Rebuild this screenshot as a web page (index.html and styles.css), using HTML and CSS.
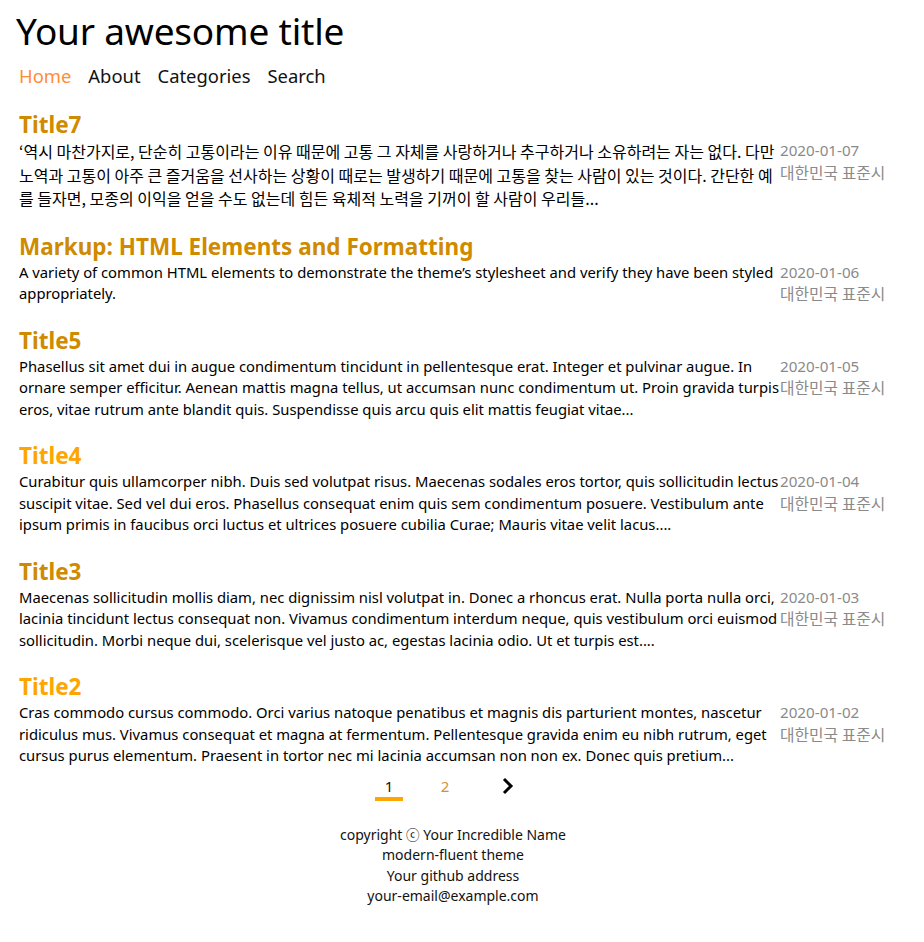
FILE: index.html
```html
<!DOCTYPE html>
<html lang="en">
<head>
<meta charset="utf-8">
<title>Your awesome title</title>
<link rel="stylesheet" href="styles.css">
</head>
<body>
<header class="site-header">
  <h1 class="site-title">Your awesome title</h1>
  <nav class="site-nav">
    <a class="nav-link active" href="#">Home</a>
    <a class="nav-link" href="#">About</a>
    <a class="nav-link" href="#">Categories</a>
    <a class="nav-link" href="#">Search</a>
  </nav>
</header>
<main class="posts">
  <article class="post">
    <h2 class="post-title visited">Title7</h2>
    <div class="post-row">
      <p class="post-excerpt ko">‘역시 마찬가지로, 단순히 고통이라는 이유 때문에 고통 그 자체를 사랑하거나 추구하거나 소유하려는 자는 없다. 다만 노역과 고통이 아주 큰 즐거움을 선사하는 상황이 때로는 발생하기 때문에 고통을 찾는 사람이 있는 것이다. 간단한 예를 들자면, 모종의 이익을 얻을 수도 없는데 힘든 육체적 노력을 기꺼이 할 사람이 우리들...</p>
      <div class="post-meta"><span>2020-01-07</span><span class="tz">대한민국 표준시</span></div>
    </div>
  </article>
  <article class="post">
    <h2 class="post-title visited">Markup: HTML Elements and Formatting</h2>
    <div class="post-row">
      <p class="post-excerpt">A variety of common HTML elements to demonstrate the theme’s stylesheet and verify they have been styled appropriately.</p>
      <div class="post-meta"><span>2020-01-06</span><span class="tz">대한민국 표준시</span></div>
    </div>
  </article>
  <article class="post">
    <h2 class="post-title visited">Title5</h2>
    <div class="post-row">
      <p class="post-excerpt">Phasellus sit amet dui in augue condimentum tincidunt in pellentesque erat. Integer et pulvinar augue. In ornare semper efficitur. Aenean mattis magna tellus, ut accumsan nunc condimentum ut. Proin gravida turpis eros, vitae rutrum ante blandit quis. Suspendisse quis arcu quis elit mattis feugiat vitae...</p>
      <div class="post-meta"><span>2020-01-05</span><span class="tz">대한민국 표준시</span></div>
    </div>
  </article>
  <article class="post">
    <h2 class="post-title">Title4</h2>
    <div class="post-row">
      <p class="post-excerpt">Curabitur quis ullamcorper nibh. Duis sed volutpat risus. Maecenas sodales eros tortor, quis sollicitudin lectus suscipit vitae. Sed vel dui eros. Phasellus consequat enim quis sem condimentum posuere. Vestibulum ante ipsum primis in faucibus orci luctus et ultrices posuere cubilia Curae; Mauris vitae velit lacus....</p>
      <div class="post-meta"><span>2020-01-04</span><span class="tz">대한민국 표준시</span></div>
    </div>
  </article>
  <article class="post">
    <h2 class="post-title visited">Title3</h2>
    <div class="post-row">
      <p class="post-excerpt">Maecenas sollicitudin mollis diam, nec dignissim nisl volutpat in. Donec a rhoncus erat. Nulla porta nulla orci, lacinia tincidunt lectus consequat non. Vivamus condimentum interdum neque, quis vestibulum orci euismod sollicitudin. Morbi neque dui, scelerisque vel justo ac, egestas lacinia odio. Ut et turpis est....</p>
      <div class="post-meta"><span>2020-01-03</span><span class="tz">대한민국 표준시</span></div>
    </div>
  </article>
  <article class="post">
    <h2 class="post-title">Title2</h2>
    <div class="post-row">
      <p class="post-excerpt">Cras commodo cursus commodo. Orci varius natoque penatibus et magnis dis parturient montes, nascetur ridiculus mus. Vivamus consequat et magna at fermentum. Pellentesque gravida enim eu nibh rutrum, eget cursus purus elementum. Praesent in tortor nec mi lacinia accumsan non non ex. Donec quis pretium...</p>
      <div class="post-meta"><span>2020-01-02</span><span class="tz">대한민국 표준시</span></div>
    </div>
  </article>
</main>
<nav class="pager">
  <a class="page current" href="#">1</a>
  <a class="page" href="#">2</a>
  <a class="page next" href="#" aria-label="Next"><svg width="14" height="18" viewBox="0 0 14 18"><path d="M3 2 L10 9 L3 16" fill="none" stroke="#000" stroke-width="3"/></svg></a>
</nav>
<footer class="site-footer">
  <div>copyright <span class="copy">ⓒ</span> Your Incredible Name</div>
  <div>modern-fluent theme</div>
  <div>Your github address</div>
  <div>your-email@example.com</div>
</footer>
</body>
</html>
```
FILE: styles.css
```css
html, body {
  margin: 0;
  padding: 0;
  background: #fff;
  color: #000;
  font-family: "Noto Sans", "Noto Sans CJK KR", sans-serif;
}
a { text-decoration: none; }

.site-header {
  padding: 8px 16px 0 16px;
}
.site-title {
  margin: 0;
  font-weight: 400;
  font-size: 37px;
  line-height: 46px;
  letter-spacing: -0.2px;
}
.site-nav {
  display: flex;
  gap: 17px;
  padding: 9px 0 0 3px;
}
.nav-link {
  color: #111;
  font-size: 18.4px;
  line-height: 26px;
}
.nav-link.active { color: #ff8c38; }

.posts {
  padding: 21px 38px 0 19px;
}
.post {
  margin-bottom: 21px;
}
.post-title {
  margin: 0;
  font-size: 22.5px;
  line-height: 30px;
  font-weight: 700;
  color: #ffa500;
}
.post-title.visited { color: #d08a00; }
.post-row {
  display: flex;
  align-items: flex-start;
}
.post-excerpt {
  flex: 1;
  margin: 0;
  font-size: 14.8px;
  line-height: 21.5px;
}
.post-excerpt.ko {
  font-family: "Noto Sans CJK KR", sans-serif;
  font-size: 16px;
  line-height: 23.5px;
}
.post-meta {
  width: 106px;
  flex: none;
  display: flex;
  flex-direction: column;
  color: #8a8a8a;
  font-size: 15.2px;
  line-height: 21.5px;
  white-space: nowrap;
}
.post-meta .tz {
  font-family: "Noto Sans CJK KR", sans-serif;
  font-size: 15.8px;
}

.pager {
  display: flex;
  justify-content: center;
  align-items: center;
  gap: 28px;
  margin-top: -15px;
  padding-right: 27px;
}
.page {
  display: block;
  width: 28px;
  text-align: center;
  color: #d4903c;
  font-size: 15px;
  line-height: 22px;
  padding-bottom: 4px;
}
.page.current {
  color: #111;
  border-bottom: 4px solid #ffa500;
  padding-bottom: 0;
}
.page.next {
  display: flex;
  justify-content: center;
  align-items: center;
  height: 26px;
  margin-left: 7px;
}

.site-footer {
  text-align: center;
  font-size: 14px;
  line-height: 20.5px;
  margin-top: 21px;
  padding-right: 18px;
  color: #111;
}
.copy {
  font-family: "Noto Sans CJK KR", sans-serif;
  font-size: 13.5px;
}
```
